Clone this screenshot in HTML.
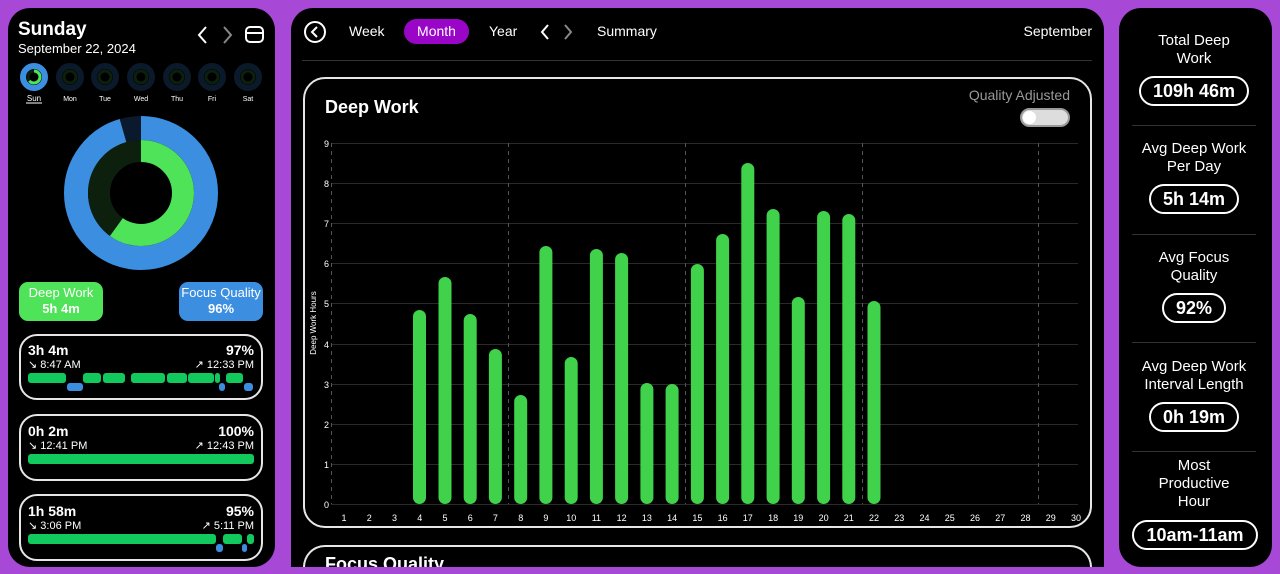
<!DOCTYPE html>
<html style="overflow:hidden;width:1280px;height:574px"><head><meta charset="utf-8"><style>
*{margin:0;padding:0;box-sizing:border-box}
body{width:1280px;height:574px;background:#a748d6;font-family:"Liberation Sans",sans-serif;color:#fff;position:relative;overflow:hidden}
.a{position:absolute}
.panel{position:absolute;background:#000;border-radius:22px}
.card{position:absolute;border:2px solid #e6e6e6;border-radius:18px}
.pill{display:inline-block;border:2px solid #fff;border-radius:20px;font-weight:bold;font-size:18px;padding:4px 12px}
.sec{position:absolute;left:1132px;width:124px;text-align:center;font-size:15px;line-height:18px}
.div{position:absolute;left:1132px;width:124px;height:1px;background:#333}
.g{background:#12c95d;position:absolute;height:10px;border-radius:3px}
.b{background:#3b8ee0;position:absolute;border-radius:3px}
.r{position:absolute;left:130px;width:124px;text-align:right}
</style></head><body>
<!-- left panel -->
<div class="panel" style="left:8px;top:8px;width:267px;height:559px"></div>
<div class="a" style="left:18px;top:19px;font-size:19px;font-weight:bold">Sunday</div>
<div class="a" style="left:18px;top:41px;font-size:13px">September 22, 2024</div>
<svg class="a" style="left:195px;top:24px" width="72" height="22"><path d="M11 3 L4 11 L11 19" stroke="#fff" stroke-width="2" fill="none"/><path d="M29 3 L36 11 L29 19" stroke="#888" stroke-width="2" fill="none"/><rect x="51" y="3" width="17" height="15" rx="4" stroke="#fff" stroke-width="2" fill="none"/><line x1="51" y1="9" x2="68" y2="9" stroke="#fff" stroke-width="2"/></svg>
<svg class="a" style="left:0;top:60px" width="280" height="50">
<g fill="none">
<circle cx="34" cy="17" r="11" stroke="#3b8ee0" stroke-width="6"/><circle cx="34" cy="17" r="6" stroke="#0d200d" stroke-width="3"/><circle cx="34" cy="17" r="6" stroke="#4fe35a" stroke-width="3" stroke-dasharray="24 40" transform="rotate(-90 34 17)"/>
<g stroke="#0b1a2a" stroke-width="6"><circle cx="70" cy="17" r="11"/><circle cx="105" cy="17" r="11"/><circle cx="141" cy="17" r="11"/><circle cx="177" cy="17" r="11"/><circle cx="212" cy="17" r="11"/><circle cx="248" cy="17" r="11"/></g>
<g stroke="#0d200d" stroke-width="3"><circle cx="70" cy="17" r="6"/><circle cx="105" cy="17" r="6"/><circle cx="141" cy="17" r="6"/><circle cx="177" cy="17" r="6"/><circle cx="212" cy="17" r="6"/><circle cx="248" cy="17" r="6"/></g>
</g>
<g fill="#fff" font-size="7" text-anchor="middle" font-family="Liberation Sans"><text x="34" y="41" font-size="8">Sun</text><text x="70" y="41">Mon</text><text x="105" y="41">Tue</text><text x="141" y="41">Wed</text><text x="177" y="41">Thu</text><text x="212" y="41">Fri</text><text x="248" y="41">Sat</text></g>
<line x1="26" y1="43" x2="42" y2="43" stroke="#fff" stroke-width="1"/>
</svg>
<svg class="a" style="left:60px;top:112px" width="162" height="162">
<circle cx="81" cy="81" r="65" fill="none" stroke="#0a1a2c" stroke-width="24"/>
<circle cx="81" cy="81" r="65" fill="none" stroke="#3b8ee0" stroke-width="24" stroke-dasharray="390 420" transform="rotate(-90 81 81)"/>
<circle cx="81" cy="81" r="42" fill="none" stroke="#0d200d" stroke-width="22"/>
<circle cx="81" cy="81" r="42" fill="none" stroke="#4fe35a" stroke-width="22" stroke-dasharray="158 300" transform="rotate(-90 81 81)"/>
</svg>
<div class="a" style="left:19px;top:282px;width:84px;height:39px;background:#4fe35a;border-radius:9px;text-align:center;font-size:13px;line-height:16px;padding-top:3px">Deep Work<br><b>5h 4m</b></div>
<div class="a" style="left:179px;top:282px;width:84px;height:39px;background:#3b8ee0;border-radius:9px;text-align:center;font-size:13px;line-height:16px;padding-top:3px">Focus Quality<br><b>96%</b></div>

<div class="card" style="left:19px;top:334px;width:244px;height:66px"></div>
<div class="a" style="left:28px;top:342px;font-size:14px;font-weight:bold">3h 4m</div>
<div class="a" style="left:28px;top:358px;font-size:11px">↘ 8:47 AM</div>
<div class="r" style="top:342px;font-size:14px;font-weight:bold">97%</div>
<div class="r" style="top:358px;font-size:11px">↗ 12:33 PM</div>
<div class="g" style="left:28px;top:373px;width:38px"></div><div class="g" style="left:83px;top:373px;width:18px"></div><div class="g" style="left:103px;top:373px;width:22px"></div><div class="g" style="left:131px;top:373px;width:34px"></div><div class="g" style="left:167px;top:373px;width:20px"></div><div class="g" style="left:188px;top:373px;width:26px"></div><div class="g" style="left:215px;top:373px;width:5px"></div><div class="g" style="left:226px;top:373px;width:17px"></div>
<div class="b" style="left:67px;top:383px;width:16px;height:8px"></div><div class="b" style="left:219px;top:383px;width:6px;height:8px"></div><div class="b" style="left:244px;top:383px;width:9px;height:8px"></div>
<div class="card" style="left:19px;top:414px;width:244px;height:67px"></div>
<div class="a" style="left:28px;top:423px;font-size:14px;font-weight:bold">0h 2m</div>
<div class="a" style="left:28px;top:439px;font-size:11px">↘ 12:41 PM</div>
<div class="r" style="top:423px;font-size:14px;font-weight:bold">100%</div>
<div class="r" style="top:439px;font-size:11px">↗ 12:43 PM</div>
<div class="g" style="left:28px;top:454px;width:226px"></div>
<div class="card" style="left:19px;top:494px;width:244px;height:67px"></div>
<div class="a" style="left:28px;top:503px;font-size:14px;font-weight:bold">1h 58m</div>
<div class="a" style="left:28px;top:519px;font-size:11px">↘ 3:06 PM</div>
<div class="r" style="top:503px;font-size:14px;font-weight:bold">95%</div>
<div class="r" style="top:519px;font-size:11px">↗ 5:11 PM</div>
<div class="g" style="left:28px;top:534px;width:188px"></div><div class="g" style="left:223px;top:534px;width:19px"></div><div class="g" style="left:247px;top:534px;width:7px"></div>
<div class="b" style="left:216px;top:544px;width:7px;height:8px"></div><div class="b" style="left:242px;top:544px;width:5px;height:8px"></div>

<!-- middle -->
<div class="panel" style="left:291px;top:8px;width:813px;height:559px;border-radius:22px 22px 0 0"></div>
<svg class="a" style="left:303px;top:20px" width="24" height="24"><circle cx="12" cy="12" r="10" stroke="#fff" stroke-width="2" fill="none"/><path d="M14 7 L9 12 L14 17" stroke="#fff" stroke-width="2" fill="none"/></svg>
<div class="a" style="left:349px;top:23px;font-size:14px">Week</div>
<div class="a" style="left:404px;top:19px;width:65px;height:25px;background:#9a06c8;border-radius:13px;font-size:14px;text-align:center;line-height:25px">Month</div>
<div class="a" style="left:489px;top:23px;font-size:14px">Year</div>
<svg class="a" style="left:536px;top:22px" width="44" height="20"><path d="M12 3 L6 10 L12 17" stroke="#fff" stroke-width="2" fill="none"/><path d="M29 3 L35 10 L29 17" stroke="#888" stroke-width="2" fill="none"/></svg>
<div class="a" style="left:597px;top:23px;font-size:14px">Summary</div>
<div class="a" style="left:992px;width:100px;text-align:right;top:23px;font-size:14px">September</div>
<div class="a" style="left:302px;top:60px;width:790px;height:1px;background:#333"></div>
<div class="card" style="left:303px;top:77px;width:789px;height:451px;border-radius:22px"></div>
<div class="card" style="left:303px;top:545px;width:789px;height:29px;border-radius:22px 22px 0 0;border-bottom:none"></div>
<div class="a" style="left:325px;top:555px;font-size:18px;line-height:19px;height:12px;overflow:hidden;font-weight:bold">Focus Quality</div>
<div class="a" style="left:325px;top:97px;font-size:18px;font-weight:bold">Deep Work</div>
<div class="a" style="left:920px;width:150px;text-align:right;top:87px;font-size:14px;color:#999">Quality Adjusted</div>
<div class="a" style="left:1020px;top:108px;width:50px;height:19px;background:#ddd;border:2px solid #999;border-radius:10px"><div style="position:absolute;left:1px;top:1px;width:13px;height:13px;border-radius:7px;background:#fff"></div></div>
<svg class="a" style="left:0;top:0" width="1280" height="574" font-family="Liberation Sans">
<g stroke="#2a2a2a" stroke-width="1">
<line x1="331" y1="504.5" x2="1078" y2="504.5"/><line x1="331" y1="464.5" x2="1078" y2="464.5"/><line x1="331" y1="424.5" x2="1078" y2="424.5"/><line x1="331" y1="384.5" x2="1078" y2="384.5"/><line x1="331" y1="344.5" x2="1078" y2="344.5"/><line x1="331" y1="303.5" x2="1078" y2="303.5"/><line x1="331" y1="263.5" x2="1078" y2="263.5"/><line x1="331" y1="223.5" x2="1078" y2="223.5"/><line x1="331" y1="183.5" x2="1078" y2="183.5"/><line x1="331" y1="143.5" x2="1078" y2="143.5"/>
</g>
<g stroke="#555" stroke-dasharray="4 4"><line x1="331.5" y1="143" x2="331.5" y2="504"/><line x1="508.5" y1="143" x2="508.5" y2="504"/><line x1="685.5" y1="143" x2="685.5" y2="504"/><line x1="862.5" y1="143" x2="862.5" y2="504"/><line x1="1038.5" y1="143" x2="1038.5" y2="504"/></g>
<g fill="#fff" font-size="9" text-anchor="end"><text x="329" y="508">0</text><text x="329" y="468">1</text><text x="329" y="428">2</text><text x="329" y="388">3</text><text x="329" y="348">4</text><text x="329" y="307">5</text><text x="329" y="267">6</text><text x="329" y="227">7</text><text x="329" y="187">8</text><text x="329" y="147">9</text></g>
<text x="316" y="323" fill="#fff" font-size="8" text-anchor="middle" transform="rotate(-90 316 323)">Deep Work Hours</text>
<g fill="#40d24a">
<rect x="413" y="310" width="13" height="194" rx="6.5"/><rect x="438.5" y="277" width="13" height="227" rx="6.5"/><rect x="463.7" y="314" width="13" height="190" rx="6.5"/><rect x="488.9" y="349" width="13" height="155" rx="6.5"/><rect x="514.2" y="395" width="13" height="109" rx="6.5"/><rect x="539.4" y="246" width="13" height="258" rx="6.5"/><rect x="564.7" y="357" width="13" height="147" rx="6.5"/><rect x="589.9" y="249" width="13" height="255" rx="6.5"/><rect x="615.1" y="253" width="13" height="251" rx="6.5"/><rect x="640.4" y="383" width="13" height="121" rx="6.5"/><rect x="665.6" y="384" width="13" height="120" rx="6.5"/><rect x="690.9" y="264" width="13" height="240" rx="6.5"/><rect x="716.1" y="234" width="13" height="270" rx="6.5"/><rect x="741.3" y="163" width="13" height="341" rx="6.5"/><rect x="766.6" y="209" width="13" height="295" rx="6.5"/><rect x="791.8" y="297" width="13" height="207" rx="6.5"/><rect x="817.1" y="211" width="13" height="293" rx="6.5"/><rect x="842.3" y="214" width="13" height="290" rx="6.5"/><rect x="867.5" y="301" width="13" height="203" rx="6.5"/>
</g>
<g fill="#fff" font-size="9" text-anchor="middle">
<text x="344" y="521">1</text><text x="369.2" y="521">2</text><text x="394.5" y="521">3</text><text x="419.7" y="521">4</text><text x="445" y="521">5</text><text x="470.2" y="521">6</text><text x="495.4" y="521">7</text><text x="520.7" y="521">8</text><text x="545.9" y="521">9</text><text x="571.2" y="521">10</text><text x="596.4" y="521">11</text><text x="621.6" y="521">12</text><text x="646.9" y="521">13</text><text x="672.1" y="521">14</text><text x="697.4" y="521">15</text><text x="722.6" y="521">16</text><text x="747.8" y="521">17</text><text x="773.1" y="521">18</text><text x="798.3" y="521">19</text><text x="823.6" y="521">20</text><text x="848.8" y="521">21</text><text x="874" y="521">22</text><text x="899.3" y="521">23</text><text x="924.5" y="521">24</text><text x="949.8" y="521">25</text><text x="975" y="521">26</text><text x="1000.2" y="521">27</text><text x="1025.5" y="521">28</text><text x="1050.7" y="521">29</text><text x="1076" y="521">30</text>
</g>
</svg>
<div class="a" style="left:0;top:567px;width:1280px;height:7px;background:#a748d6"></div>

<!-- right -->
<div class="panel" style="left:1119px;top:8px;width:153px;height:559px"></div>
<div class="sec" style="top:32px">Total Deep<br>Work</div>
<div class="sec" style="top:76px"><span class="pill">109h 46m</span></div>
<div class="div" style="top:125px"></div>
<div class="sec" style="top:140px">Avg Deep Work<br>Per Day</div>
<div class="sec" style="top:184px"><span class="pill">5h 14m</span></div>
<div class="div" style="top:234px"></div>
<div class="sec" style="top:249px">Avg Focus<br>Quality</div>
<div class="sec" style="top:293px"><span class="pill">92%</span></div>
<div class="div" style="top:342px"></div>
<div class="sec" style="top:358px">Avg Deep Work<br>Interval Length</div>
<div class="sec" style="top:402px"><span class="pill">0h 19m</span></div>
<div class="div" style="top:451px"></div>
<div class="sec" style="top:457px">Most<br>Productive<br>Hour</div>
<div class="sec" style="top:520px;left:1126px;width:138px"><span class="pill">10am-11am</span></div>
</body></html>
